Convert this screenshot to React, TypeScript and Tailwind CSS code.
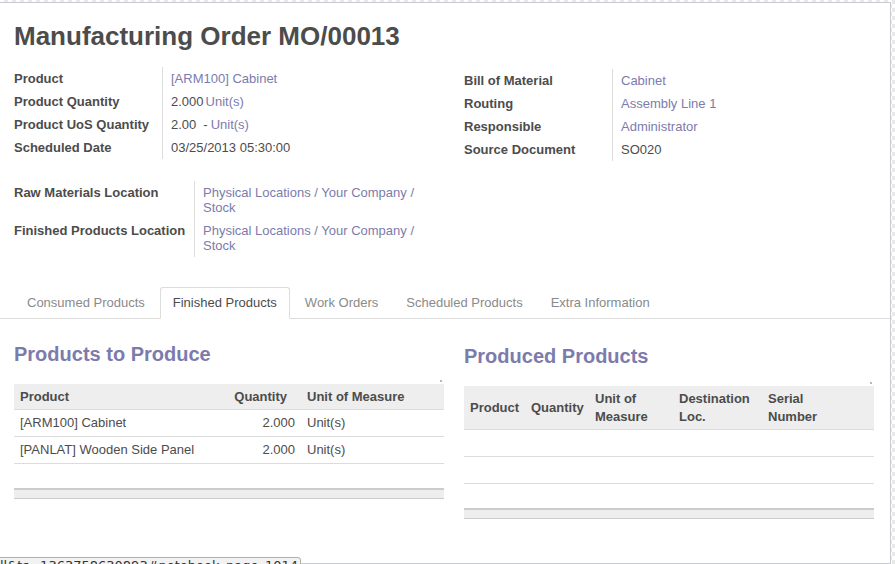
import React from 'react';

const link = 'text-[#7c7bad]';

type Field = { label: string; value: React.ReactNode };

const leftFields: Field[] = [
  { label: 'Product', value: <span className={link}>[ARM100] Cabinet</span> },
  {
    label: 'Product Quantity',
    value: (
      <span>
        2.000<span className={`ml-[2px] ${link}`}>Unit(s)</span>
      </span>
    ),
  },
  {
    label: 'Product UoS Quantity',
    value: (
      <span>
        2.00<span className="ml-[7px]">-</span>
        <span className={`ml-[3px] ${link}`}>Unit(s)</span>
      </span>
    ),
  },
  { label: 'Scheduled Date', value: '03/25/2013 05:30:00' },
];

const rightFields: Field[] = [
  { label: 'Bill of Material', value: <span className={link}>Cabinet</span> },
  { label: 'Routing', value: <span className={link}>Assembly Line 1</span> },
  { label: 'Responsible', value: <span className={link}>Administrator</span> },
  { label: 'Source Document', value: 'SO020' },
];

const locations: Field[] = [
  {
    label: 'Raw Materials Location',
    value: <span className={link}>Physical Locations / Your Company / Stock</span>,
  },
  {
    label: 'Finished Products Location',
    value: <span className={link}>Physical Locations / Your Company / Stock</span>,
  },
];

const FieldGroup: React.FC<{ fields: Field[]; labelWidth: string; valueWidth: string }> = ({
  fields,
  labelWidth,
  valueWidth,
}) => (
  <div className="flex flex-col">
    {fields.map((f) => (
      <div key={f.label} className="flex leading-[15px]">
        <div className={`${labelWidth} py-[4px] font-bold text-[#4c4c4c]`}>{f.label}</div>
        <div className={`${valueWidth} border-l border-[#dcdcdc] py-[4px] pl-[8px] text-[#4c4c4c]`}>{f.value}</div>
      </div>
    ))}
  </div>
);

const tabs = ['Consumed Products', 'Finished Products', 'Work Orders', 'Scheduled Products', 'Extra Information'];

const TableEnd: React.FC<{ cols: number }> = ({ cols }) => (
  <tfoot>
    <tr className="h-[26px]">
      <td colSpan={cols}></td>
    </tr>
    <tr className="h-[9px] border-t-2 border-b border-[#cccccc] bg-[#eeeeee]">
      <td colSpan={cols}></td>
    </tr>
  </tfoot>
);

// tiny resize marker above each list
const Dot = () => (
  <div className="flex h-[18px] items-end justify-end pb-[2px] pr-[2px]">
    <div className="h-[2px] w-[2px] bg-[#b8b8b8]" />
  </div>
);

export default function App() {
  return (
    <div className="relative h-[564px] w-[895px] overflow-hidden bg-[repeating-conic-gradient(#e8e8e8_0%_25%,#ffffff_0%_50%)] bg-[length:8px_8px] font-['Liberation_Sans',Arial,sans-serif] text-[13px] text-[#4c4c4c]">
      <div className="mt-[2px] h-[562px] w-[891px] border-t border-r border-b border-[#c9c9d1] bg-white">
        {/* header */}
        <div className="px-[14px] pt-[18px]">
          <h1 className="text-[26px] font-bold leading-[30px] text-[#4c4c4c]">Manufacturing Order MO/00013</h1>
          <div className="mt-[16px] flex">
            <div className="w-[450px]">
              <FieldGroup fields={leftFields} labelWidth="w-[148px]" valueWidth="w-[282px]" />
              <div className="mt-[22px]">
                <FieldGroup fields={locations} labelWidth="w-[180px]" valueWidth="w-[250px]" />
              </div>
            </div>
            <div className="mt-[2px]">
              <FieldGroup fields={rightFields} labelWidth="w-[148px]" valueWidth="w-[262px]" />
            </div>
          </div>
        </div>

        {/* tabs */}
        <div className="mt-[30px] flex border-b border-[#dcdcdc] pl-[14px]">
          {tabs.map((t) => {
            const active = t === 'Finished Products';
            return (
              <div
                key={t}
                className={`-mb-px mr-[2px] rounded-t-[3px] border px-[12px] pt-[7px] pb-[8px] leading-[15px] ${
                  active
                    ? 'border-[#dcdcdc] border-b-white bg-white text-[#4c4c4c]'
                    : 'border-transparent text-[#8a8a8a]'
                }`}
              >
                {t}
              </div>
            );
          })}
        </div>

        {/* notebook page */}
        <div className="flex px-[14px] pt-[23px]">
          <div className="w-[450px]">
            <h2 className="text-[20px] font-bold leading-[24px] text-[#7c7bad]">Products to Produce</h2>
            <div className="w-[430px]">
              <Dot />
              <table className="w-[430px] table-fixed border-collapse">
                <colgroup>
                  <col className="w-[211px]" />
                  <col className="w-[76px]" />
                  <col className="w-[143px]" />
                </colgroup>
                <thead>
                  <tr className="h-[25px] border-b border-[#dcdcdc] bg-[#eeeeee] font-bold">
                    <th className="px-[6px] text-left">Product</th>
                    <th className="pr-[14px] text-right">Quantity</th>
                    <th className="px-[6px] text-left">Unit of Measure</th>
                  </tr>
                </thead>
                <tbody>
                  {[
                    ['[ARM100] Cabinet', '2.000', 'Unit(s)'],
                    ['[PANLAT] Wooden Side Panel', '2.000', 'Unit(s)'],
                  ].map((r) => (
                    <tr key={r[0]} className="h-[27px] border-b border-[#dcdcdc]">
                      <td className="px-[6px]">{r[0]}</td>
                      <td className="pr-[6px] text-right">{r[1]}</td>
                      <td className="px-[6px]">{r[2]}</td>
                    </tr>
                  ))}
                </tbody>
                <TableEnd cols={3} />
              </table>
            </div>
          </div>

          <div className="mt-[2px]">
            <h2 className="text-[20px] font-bold leading-[24px] text-[#7c7bad]">Produced Products</h2>
            <div className="w-[410px]">
              <Dot />
              <table className="w-[410px] table-fixed border-collapse">
                <colgroup>
                  <col className="w-[61px]" />
                  <col className="w-[64px]" />
                  <col className="w-[84px]" />
                  <col className="w-[89px]" />
                  <col className="w-[112px]" />
                </colgroup>
                <thead>
                  <tr className="h-[43px] border-b border-[#dcdcdc] bg-[#eeeeee] font-bold leading-[18px]">
                    <th className="px-[6px] pt-px text-left">Product</th>
                    <th className="px-[6px] pt-px text-left">Quantity</th>
                    <th className="px-[6px] pt-px text-left">
                      Unit of
                      <br />
                      Measure
                    </th>
                    <th className="px-[6px] pt-px text-left">
                      Destination
                      <br />
                      Loc.
                    </th>
                    <th className="px-[6px] pt-px text-left">
                      Serial
                      <br />
                      Number
                    </th>
                  </tr>
                </thead>
                <tbody>
                  {[0, 1].map((i) => (
                    <tr key={i} className="h-[27px] border-b border-[#dcdcdc]">
                      <td colSpan={5}></td>
                    </tr>
                  ))}
                </tbody>
                <TableEnd cols={5} />
              </table>
            </div>
          </div>
        </div>
      </div>

      {/* browser status bar, cut by the window edge */}
      <div className="absolute bottom-[-6px] left-[-2px] h-[13px] w-[303px] overflow-hidden rounded-tr-[3px] border border-[#b0b0b0] bg-[#f2f2f2] pl-[1px] font-['DejaVu_Sans',sans-serif] text-[13px] leading-[15px] text-[#333]">
        ll&amp;ts=1363758630893#notebook_page_1014
      </div>
    </div>
  );
}
